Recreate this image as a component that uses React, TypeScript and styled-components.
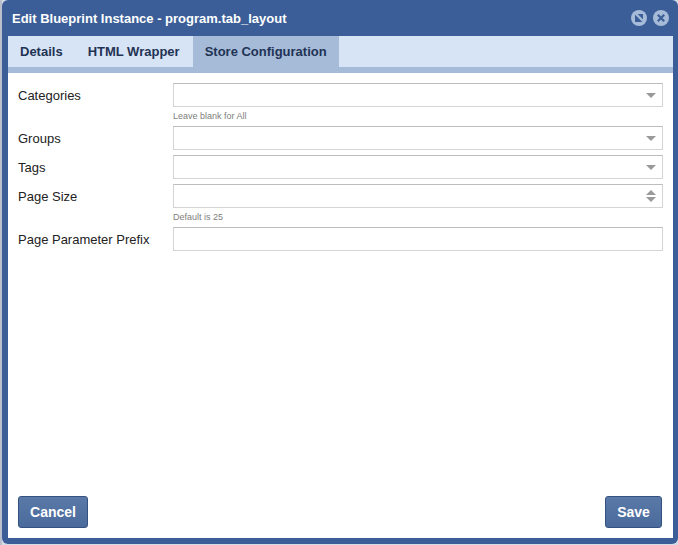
import React from "react";
import styled, { createGlobalStyle } from "styled-components";

const GlobalStyle = createGlobalStyle`
  html, body {
    margin: 0;
    padding: 0;
    background: #f1f2f4;
  }
  body {
    font-family: "Liberation Sans", Arial, sans-serif;
    overflow: hidden;
  }
`;

const Page = styled.div`
  width: 678px;
  height: 545px;
  padding-left: 2px;
  box-sizing: border-box;
  background: linear-gradient(90deg, #b9c0cc 0, #b9c0cc 2px, #d5dce8 2px);
`;

const Win = styled.div`
  width: 676px;
  height: 544px;
  box-sizing: border-box;
  display: flex;
  flex-direction: column;
  background: #3b5e98;
  border-radius: 6px;
  padding: 0 5px 6px 6px;
`;

const TitleBar = styled.div`
  height: 36px;
  flex: none;
  display: flex;
  align-items: center;
  padding: 0 4px 0 4px;
`;

const Title = styled.div`
  flex: 1;
  font-size: 13px;
  font-weight: bold;
  color: #fff;
`;

const WinButtons = styled.div`
  display: flex;
  gap: 6px;
`;

const Tabs = styled.div`
  flex: none;
  display: flex;
  gap: 1px;
  background: #d7e4f5;
  border-bottom: 6px solid #a5bbd8;
  height: 31px;
`;

const Tab = styled.div<{ $active?: boolean }>`
  display: flex;
  align-items: center;
  padding: 0 12px;
  font-size: 13px;
  font-weight: bold;
  color: #1f3354;
  background: ${(p) => (p.$active ? "#a5bbd8" : "transparent")};
`;

const Body = styled.div`
  flex: 1;
  display: flex;
  flex-direction: column;
  background: #fff;
  padding: 10px;
`;

const Form = styled.div`
  flex: 1;
  display: flex;
  flex-direction: column;
`;

const Row = styled.div`
  display: flex;
  margin-bottom: 5px;
`;

const Label = styled.div`
  width: 155px;
  height: 24px;
  flex: none;
  font-size: 13px;
  line-height: 25px;
  color: #222;
`;

const FieldWrap = styled.div`
  flex: 1;
`;

const Field = styled.div`
  position: relative;
  height: 24px;
  box-sizing: border-box;
  background: #fff;
  border: 1px solid #d4d4d4;
  border-top-color: #bdbdbd;
`;

const Arrows = styled.div`
  position: absolute;
  right: 6px;
  top: 0;
  bottom: 0;
  display: flex;
  flex-direction: column;
  justify-content: center;
  gap: 2px;
`;

const Arrow = styled.div<{ $up?: boolean }>`
  width: 0;
  height: 0;
  border-left: 5px solid transparent;
  border-right: 5px solid transparent;
  ${(p) =>
    p.$up ? "border-bottom: 5px solid #9a9a9a;" : "border-top: 5px solid #9a9a9a;"}
`;

const Hint = styled.div`
  height: 14px;
  font-size: 9px;
  line-height: 18px;
  color: #808080;
`;

const Footer = styled.div`
  display: flex;
  justify-content: space-between;
  padding-right: 1px;
`;

const Button = styled.button`
  height: 32px;
  box-sizing: border-box;
  border: 1px solid #34517f;
  border-radius: 3px;
  background: linear-gradient(#5a79a8, #4a6a9c);
  color: #fff;
  font-family: inherit;
  font-size: 14px;
  font-weight: bold;
  padding: 0;
`;

const CancelButton = styled(Button)`
  width: 70px;
`;

const SaveButton = styled(Button)`
  width: 57px;
`;

function BlockIcon() {
  return (
    <svg width="16" height="16" viewBox="0 0 16 16">
      <circle cx="8" cy="8" r="8" fill="#a5bbd8" />
      <rect x="4" y="4" width="8" height="8" fill="#3b5e98" />
      <path d="M3.5 2.5 L13.5 12.5" stroke="#a5bbd8" strokeWidth="2.4" />
    </svg>
  );
}

function CloseIcon() {
  return (
    <svg width="16" height="16" viewBox="0 0 16 16">
      <circle cx="8" cy="8" r="8" fill="#a5bbd8" />
      <path d="M4.8 4.8 L11.2 11.2 M11.2 4.8 L4.8 11.2" stroke="#3b5e98" strokeWidth="2.2" />
    </svg>
  );
}

function SelectField() {
  return (
    <Field>
      <Arrows>
        <Arrow />
      </Arrows>
    </Field>
  );
}

export default function App() {
  return (
    <Page>
      <GlobalStyle />
      <Win>
        <TitleBar>
          <Title>Edit Blueprint Instance - program.tab_layout</Title>
          <WinButtons>
            <BlockIcon />
            <CloseIcon />
          </WinButtons>
        </TitleBar>
        <Tabs>
          <Tab>Details</Tab>
          <Tab>HTML Wrapper</Tab>
          <Tab $active>Store Configuration</Tab>
        </Tabs>
        <Body>
          <Form>
            <Row>
              <Label>Categories</Label>
              <FieldWrap>
                <SelectField />
                <Hint>Leave blank for All</Hint>
              </FieldWrap>
            </Row>
            <Row>
              <Label>Groups</Label>
              <FieldWrap>
                <SelectField />
              </FieldWrap>
            </Row>
            <Row>
              <Label>Tags</Label>
              <FieldWrap>
                <SelectField />
              </FieldWrap>
            </Row>
            <Row>
              <Label>Page Size</Label>
              <FieldWrap>
                <Field>
                  <Arrows>
                    <Arrow $up />
                    <Arrow />
                  </Arrows>
                </Field>
                <Hint>Default is 25</Hint>
              </FieldWrap>
            </Row>
            <Row>
              <Label>Page Parameter Prefix</Label>
              <FieldWrap>
                <Field />
              </FieldWrap>
            </Row>
          </Form>
          <Footer>
            <CancelButton>Cancel</CancelButton>
            <SaveButton>Save</SaveButton>
          </Footer>
        </Body>
      </Win>
    </Page>
  );
}
